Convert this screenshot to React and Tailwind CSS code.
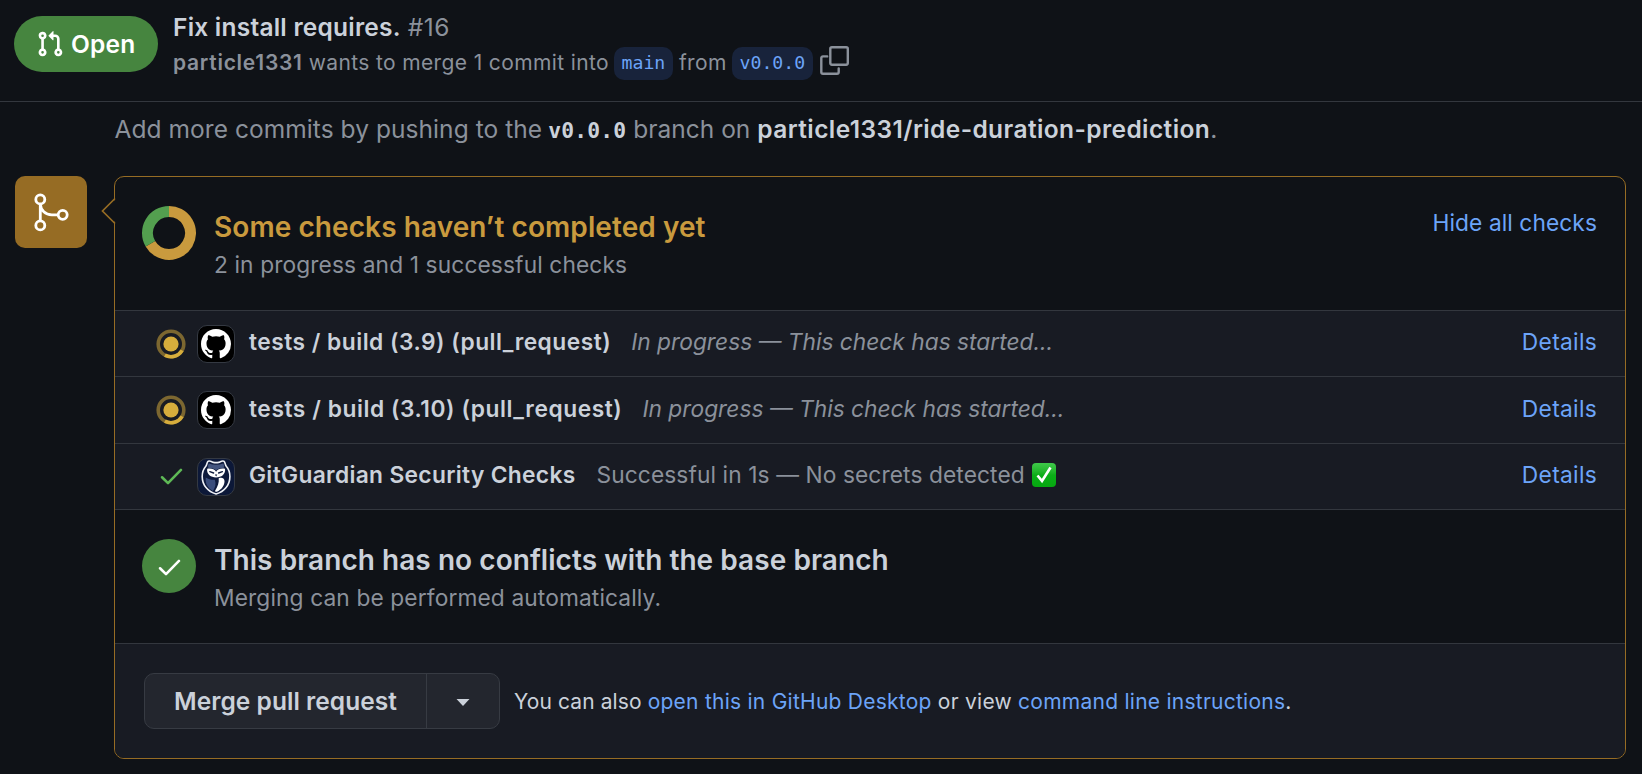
import React from "react";

const GITHUB_MARK =
  "M8 0C3.58 0 0 3.58 0 8c0 3.54 2.29 6.53 5.47 7.59.4.07.55-.17.55-.38 0-.19-.01-.82-.01-1.49-2.01.37-2.53-.49-2.69-.94-.09-.23-.48-.94-.82-1.13-.28-.15-.68-.52-.01-.53.63-.01 1.08.58 1.23.82.72 1.21 1.87.87 2.33.66.07-.52.28-.87.51-1.07-1.78-.2-3.64-.89-3.64-3.95 0-.87.31-1.59.82-2.15-.08-.2-.36-1.02.08-2.12 0 0 .67-.21 2.2.82.64-.18 1.32-.27 2-.27.68 0 1.36.09 2 .27 1.53-1.04 2.2-.82 2.2-.82.44 1.1.16 1.92.08 2.12.51.56.82 1.27.82 2.15 0 3.07-1.87 3.75-3.65 3.95.29.25.54.73.54 1.48 0 1.07-.01 1.93-.01 2.2 0 .21.15.46.55.38A8.013 8.013 0 0 0 16 8c0-4.42-3.58-8-8-8z";

function PullRequestIcon() {
  return (
    <svg className="h-7 w-7 shrink-0" viewBox="0 0 16 16" fill="currentColor">
      <path d="M1.5 3.25a2.25 2.25 0 1 1 3 2.122v5.256a2.251 2.251 0 1 1-1.5 0V5.372A2.25 2.25 0 0 1 1.5 3.25Zm5.677-.177L9.573.677A.25.25 0 0 1 10 .854V2.5h1A2.5 2.5 0 0 1 13.5 5v5.628a2.251 2.251 0 1 1-1.5 0V5a1 1 0 0 0-1-1h-1v1.646a.25.25 0 0 1-.427.177L7.177 3.427a.25.25 0 0 1 0-.354ZM3.75 2.5a.75.75 0 1 0 0 1.5.75.75 0 0 0 0-1.5Zm0 9.5a.75.75 0 1 0 0 1.5.75.75 0 0 0 0-1.5Zm8.25.75a.75.75 0 1 0 1.5 0 .75.75 0 0 0-1.5 0Z" />
    </svg>
  );
}

function CopyIcon() {
  return (
    <svg className="mb-[6px] ml-[7px] h-[29px] w-[29px] shrink-0" viewBox="0 0 29 29" fill="none" stroke="#8b919b" strokeWidth="2.4">
      <rect x="10.3" y="1.2" width="17.5" height="17.5" rx="1.6" />
      <path d="M7.2 10.4H3a1.7 1.7 0 0 0-1.7 1.7v14A1.7 1.7 0 0 0 3 27.8h14a1.7 1.7 0 0 0 1.7-1.7v-3.6" strokeLinecap="round" />
    </svg>
  );
}

function MergeIcon() {
  return (
    <svg className="h-[72px] w-[72px]" viewBox="0 0 72 72" fill="none" stroke="#fff" strokeWidth="2.8">
      <circle cx="25.3" cy="23.4" r="4.5" />
      <circle cx="25.3" cy="49.4" r="4.5" />
      <circle cx="47.7" cy="38.8" r="4.5" />
      <path d="M25.3 28v16.8M25.3 28c.5 6.4 5 10.8 11.5 10.8h6.3" />
    </svg>
  );
}

function ProgressRing() {
  return (
    <svg className="h-[54px] w-[54px] shrink-0" viewBox="0 0 54 54" fill="none" strokeWidth="11">
      <path d="M27 5.5A21.5 21.5 0 1 1 8.38 37.75" stroke="#c99a3e" />
      <path d="M8.38 37.75A21.5 21.5 0 0 1 27 5.5" stroke="#539f4f" />
    </svg>
  );
}

function InProgressIcon() {
  return (
    <svg className="h-[30px] w-[30px]" viewBox="0 0 30 30" fill="none">
      <circle cx="15" cy="15" r="12.8" stroke="#7c6730" strokeWidth="3.6" />
      <circle cx="15" cy="15" r="7.6" fill="#d6ad3c" />
      <path d="M8.9 26.2A12.8 12.8 0 0 0 26.1 21.4" stroke="#d6ad3c" strokeWidth="3.6" />
    </svg>
  );
}

function CheckIcon({ className }) {
  return (
    <svg className={className} viewBox="0 0 24 18" fill="none" stroke="currentColor" strokeWidth="2.7" strokeLinecap="round" strokeLinejoin="round">
      <path d="M2 9.8l6.3 6.3L22 2" />
    </svg>
  );
}

function Owl() {
  return (
    <svg className="h-9 w-9 shrink-0" viewBox="0 0 36 36">
      <path
        d="M10.200 2.200c2.200-.9 3.600.9 5.200 1.200 1.600.3 3.700.3 5.300 0s3-2.100 5.200-1.200c1.300.6 1.200 3.600 2.600 5.400 2 2.400 3.400 5.800 3.400 9.900 0 8.500-5.500 15.300-13.800 17.500C9.800 32.800 4.200 26 4.200 17.500c0-4.100 1.400-7.500 3.400-9.900 1.400-1.800 1.300-4.800 2.600-5.400Z"
        fill="#0e1a3c"
        stroke="#eef0f5"
        strokeWidth="1.600"
      />
      <path d="M10.800 4.500c4.600 1.700 9.800 1.700 14.500 0 .9 1.600.9 3.200.4 4.500-3.500-.3-6.200.7-7.600 2.500-1.400-1.800-4.200-2.800-7.700-2.500-.5-1.300-.5-2.900.4-4.500Z" fill="#44557f" />
      <path d="M7.800 18.500c2.500 1.800 5.500 2.400 9 2.300 1.500 4.300.5 7.800-1.800 11.200-5.500-3-8-8-7.200-13.500Z" fill="#3a4d7c" />
      <path d="M20.700 19.200c2.800-1 5.500-.5 5.800 2.800.2 4.300-3 8.800-7.700 10.800-1.300.2-2-.6-1.600-1.400 2.500-4 4-7.600 3.500-12.200Z" fill="#fff" />
      <path d="M9.200 9.800c4-.8 7.300.6 8.900 2.900 1.600-2.300 4.900-3.700 8.900-2.900.5 2.600-.4 4.800-2.200 6.400-1.800 1.400-4 2-6.700 2.200-2.700-.2-4.900-.8-6.700-2.200-1.800-1.600-2.700-3.800-2.200-6.400Z" fill="#fff" />
      <path d="M11.800 12.700l3.800 1.300M24.400 12.700l-3.800 1.300" stroke="#0e1a3c" strokeWidth="1.400" strokeLinecap="round" />
      <path d="M16.900 15.400h2.400l-1.200 2Z" fill="#0e1a3c" />
    </svg>
  );
}

function Avatar({ owl }) {
  return owl ? (
    <span className="flex h-[38px] w-[38px] shrink-0 items-center justify-center overflow-hidden rounded-[10px] border border-[#343942] bg-[#0c1838]">
      <Owl />
    </span>
  ) : (
    <span className="flex h-[38px] w-[38px] shrink-0 items-center justify-center rounded-[10px] border border-[#343942] bg-black">
      <svg className="h-[30px] w-[30px]" viewBox="0 0 16 16" fill="#fff">
        <path d={GITHUB_MARK} />
      </svg>
    </span>
  );
}

function CheckEmoji() {
  return (
    <span className="ml-[7px] flex h-6 w-6 shrink-0 items-center justify-center rounded-[4px] bg-gradient-to-b from-[#3fc94a] via-[#0aae17] to-[#06a810]">
      <svg className="h-[18px] w-[18px]" viewBox="0 0 18 18" fill="none" stroke="#fff" strokeWidth="2.6">
        <path d="M2.5 9.5L7 15 15.5 1.5" />
      </svg>
    </span>
  );
}

function CheckRow({ rowClass, textClass, icon, owl, name, nameClass, status, statusClass, emoji }) {
  return (
    <div className={`flex items-center border-t border-[#33373e] bg-[#181b23] pr-[28px] pl-[41px] ${rowClass}`}>
      <span className="flex w-[30px] shrink-0 justify-center">{icon}</span>
      <span className="ml-[11px] flex">
        <Avatar owl={owl} />
      </span>
      <span className={`ml-[14px] flex items-center leading-[34px] ${textClass}`}>
        <span className={`font-semibold text-[#cbd1da] ${nameClass}`}>{name}</span>
        <span className={statusClass}>{status}</span>
        {emoji && <CheckEmoji />}
      </span>
      <a className={`ml-auto leading-[34px] tracking-[0.3px] text-[#6ca4f8] ${textClass}`}>Details</a>
    </div>
  );
}

export default function App() {
  return (
    <div className="h-[774px] w-[1642px] overflow-hidden bg-[#0f1217] font-['Inter',sans-serif] text-[22.75px] whitespace-nowrap text-[#8b919b]">
      <header className="flex h-[102px] border-b border-[#33373e] pl-[14px]">
        <div className="mt-4 flex h-14 w-36 items-center rounded-full bg-[#46853f] pl-[22px] text-[24.5px] font-semibold text-white">
          <PullRequestIcon />
          <span className="ml-[7px] tracking-[0.2px]">Open</span>
        </div>
        <div className="ml-[15px] pt-[10px]">
          <div className="flex text-[24.5px] leading-[34px]">
            <span className="font-semibold tracking-[0.23px] text-[#cbd1da]">Fix install requires.</span>
            <span className="ml-[7px] tracking-[0.5px]">#16</span>
          </div>
          <div className="mt-[2px] flex h-[34px] items-center text-[21px] leading-[34px]">
            <span className="font-semibold tracking-[0.73px]">particle1331</span>
            <span className="ml-[6px] tracking-[0.37px]">wants to merge 1 commit into</span>
            <span className="ml-[5px] flex h-[33px] w-[59px] items-center justify-center rounded-[10px] bg-[#18233b] font-['DejaVu_Sans_Mono',monospace] text-[18.2px] text-[#6ca4f8]">main</span>
            <span className="ml-[6px] tracking-[0.4px]">from</span>
            <span className="ml-[5px] flex h-[33px] w-[81px] items-center justify-center rounded-[10px] bg-[#18233b] font-['DejaVu_Sans_Mono',monospace] text-[18.2px] text-[#6ca4f8]">v0.0.0</span>
            <CopyIcon />
          </div>
        </div>
      </header>

      <p className="mt-[9px] ml-[114.5px] flex h-[36px] items-baseline text-[24.5px] leading-[36px]">
        <span className="tracking-[0.06px]">Add more commits by pushing to the</span>
        <b className="ml-[6px] font-['DejaVu_Sans_Mono',monospace] text-[21.3px] tracking-[0.2px] text-[#cbd1da]">v0.0.0</b>
        <span className="ml-[7px]">branch on</span>
        <span className="ml-[7px] font-semibold tracking-[0.4px] text-[#cbd1da]">particle1331/ride-duration-prediction</span>
        <span>.</span>
      </p>

      <main className="mt-[29px] flex pl-[15px]">
        <div className="h-[72px] w-[72px] shrink-0 rounded-[10px] bg-[#966c24]">
          <MergeIcon />
        </div>
        <section className="relative ml-[27px] h-[583px] w-[1512px] rounded-[10px] border border-[#966c24]">
          <svg className="absolute top-[20px] -left-[14px] h-[28px] w-[15px]" viewBox="0 0 15 28">
            <path d="M15 2L1.5 14 15 26Z" fill="#0f1217" />
            <path d="M14 1.5L1.5 14 14 26.5" fill="none" stroke="#966c24" strokeWidth="1.7" />
          </svg>

          <div className="flex h-[133px] pt-[29px] pr-[28px] pl-[27px]">
            <ProgressRing />
            <div className="ml-[18px]">
              <h2 className="text-[28px] leading-[42px] font-semibold tracking-[0.08px] text-[#c99a3e]">Some checks haven’t completed yet</h2>
              <p className="leading-[34px] tracking-[0.11px]">2 in progress and 1 successful checks</p>
            </div>
            <a className="ml-auto leading-[34px] tracking-[0.07px] text-[#6ca4f8]">Hide all checks</a>
          </div>

          <CheckRow
            rowClass="h-[66px]"
            textClass="mb-1"
            icon={<InProgressIcon />}
            name="tests / build (3.9) (pull_request)"
            nameClass="tracking-[0.49px]"
            status="In progress — This check has started..."
            statusClass="ml-[20px] italic"
          />
          <CheckRow
            rowClass="h-[67px]"
            textClass="mb-[2px]"
            icon={<InProgressIcon />}
            name="tests / build (3.10) (pull_request)"
            nameClass="tracking-[0.56px]"
            status="In progress — This check has started..."
            statusClass="ml-[20px] italic"
          />
          <CheckRow
            rowClass="h-[66px]"
            textClass="mb-1"
            icon={<CheckIcon className="ml-px h-[17px] w-[23px] text-[#5eb956]" />}
            owl
            name="GitGuardian Security Checks"
            nameClass="tracking-[0.33px]"
            status="Successful in 1s — No secrets detected"
            statusClass="ml-[21px] tracking-[0.09px]"
            emoji
          />

          <div className="flex h-[134px] border-t border-[#33373e] pt-[29px] pl-[27px]">
            <span className="flex h-[54px] w-[54px] shrink-0 items-center justify-center rounded-full bg-[#46853f] text-white">
              <CheckIcon className="mt-[2px] ml-px h-[17px] w-[23px]" />
            </span>
            <div className="ml-[18px]">
              <h2 className="text-[28px] leading-[42px] font-semibold tracking-[0.05px] text-[#cbd1da]">This branch has no conflicts with the base branch</h2>
              <p className="leading-[34px] tracking-[0.11px]">Merging can be performed automatically.</p>
            </div>
          </div>

          <footer className="flex h-[115px] items-center rounded-b-[9px] border-t border-[#33373e] bg-[#181b23] pl-[29px]">
            <div className="flex h-14 w-[356px] rounded-[10px] border border-[#373b43] bg-[#23262e] text-[24.5px] font-semibold text-[#cbd1da]">
              <button className="flex w-[282px] items-center border-r border-[#373b43] pl-[29px] tracking-[0.05px]">Merge pull request</button>
              <button className="flex flex-1 items-center justify-center">
                <svg className="mt-[3px] h-[7px] w-[14px]" viewBox="0 0 14 7" fill="currentColor">
                  <path d="M.5 0h13L7 7Z" />
                </svg>
              </button>
            </div>
            <p className="mt-[2px] ml-[14px] text-[21px] tracking-[0.25px] text-[#cbd1da]">
              <span className="tracking-[0.1px]">You can also </span>
              <a className="text-[#6ca4f8]">open this in GitHub Desktop</a> or view{" "}
              <a className="text-[#6ca4f8]">command line instructions</a>.
            </p>
          </footer>
        </section>
      </main>
    </div>
  );
}
